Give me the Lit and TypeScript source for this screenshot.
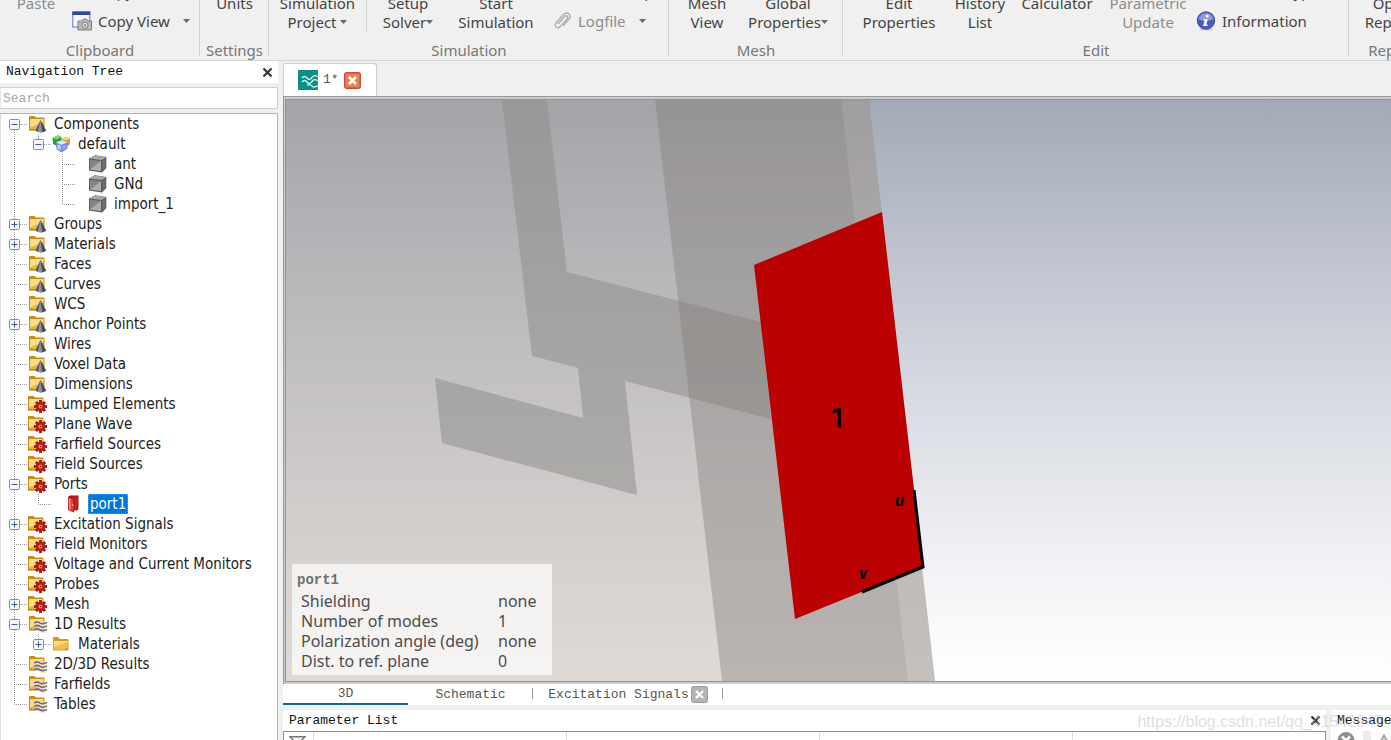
import { LitElement, html, css, svg, nothing, TemplateResult } from "lit";
import { customElement, property } from "lit/decorators.js";

type IconName = "cone" | "gear" | "wave" | "folder" | "cubes" | "solid" | "port";

interface TreeNode {
  label: string;
  icon: IconName;
  state?: "open" | "closed";
  leaf?: boolean;
  selected?: boolean;
  children?: TreeNode[];
}

const TREE: TreeNode[] = [
  {
    label: "Components", icon: "cone", state: "open", children: [
      {
        label: "default", icon: "cubes", state: "open", children: [
          { label: "ant", icon: "solid", leaf: true },
          { label: "GNd", icon: "solid", leaf: true },
          { label: "import_1", icon: "solid", leaf: true },
        ],
      },
    ],
  },
  { label: "Groups", icon: "cone", state: "closed" },
  { label: "Materials", icon: "cone", state: "closed" },
  { label: "Faces", icon: "cone" },
  { label: "Curves", icon: "cone" },
  { label: "WCS", icon: "cone" },
  { label: "Anchor Points", icon: "cone", state: "closed" },
  { label: "Wires", icon: "cone" },
  { label: "Voxel Data", icon: "cone" },
  { label: "Dimensions", icon: "cone" },
  { label: "Lumped Elements", icon: "gear" },
  { label: "Plane Wave", icon: "gear" },
  { label: "Farfield Sources", icon: "gear" },
  { label: "Field Sources", icon: "gear" },
  {
    label: "Ports", icon: "gear", state: "open", children: [
      { label: "port1", icon: "port", leaf: true, selected: true },
    ],
  },
  { label: "Excitation Signals", icon: "gear", state: "closed" },
  { label: "Field Monitors", icon: "gear" },
  { label: "Voltage and Current Monitors", icon: "gear" },
  { label: "Probes", icon: "gear" },
  { label: "Mesh", icon: "gear", state: "closed" },
  {
    label: "1D Results", icon: "wave", state: "open", children: [
      { label: "Materials", icon: "folder", state: "closed" },
    ],
  },
  { label: "2D/3D Results", icon: "wave" },
  { label: "Farfields", icon: "wave" },
  { label: "Tables", icon: "wave" },
];

const folderShape = svg`
  <path d="M1 2 Q1 1 2 1 H6.5 L8 2.5 H15.5 Q16.5 2.5 16.5 3.5 V15 H1 Z" fill="#c98d0c"/>
  <path d="M2 4 H15.5 V14 H2 Z" fill="#eab43a"/>
  <path d="M2 4 H15.5 V7 L2 12.5 Z" fill="#f8dc8c"/>
  <path d="M1 15 H16.5" stroke="#b57b06" stroke-width="1"/>`;

const gearTeeth = [0, 45, 90, 135].map(
  (a) => svg`<path d="M12.5 5 V18" transform="rotate(${a} 12.5 11.5)" stroke="#a51414" stroke-width="2.8"/>`,
);

const ICONS: Record<IconName, TemplateResult> = {
  cone: svg`${folderShape}
    <path d="M12.5 5 L18.3 15.8 Q13 19.2 7.5 15.8 Z" fill="#4c4d56"/>
    <path d="M12.5 5 L14 17.3 Q11.5 17.4 9.8 16.6 Z" fill="#9193a4"/>`,
  gear: svg`<g transform="translate(-1 0)">${folderShape}</g>
    ${gearTeeth}<circle cx="12.5" cy="11.5" r="4.6" fill="#b51a1a"/>
    <circle cx="12.5" cy="11.5" r="1.9" fill="#e0a22c"/><circle cx="12.5" cy="11.5" r=".8" fill="#7a1010"/>`,
  wave: svg`${folderShape}
    <g fill="none" stroke="#f3e3b8" stroke-width="2.6"><path d="M6 8.5 q3 -2.5 6 0 t7 -.8 M6 12 q3 -2.5 6 0 t7 -.8 M6 15.5 q3 -2.5 6 0 t7 -.8"/></g>
    <g fill="none" stroke="#5a58a8" stroke-width="1.3"><path d="M6 8 q3 -2 6 0 t7 -.8 M6 11.5 q3 -2 6 0 t7 -.8 M6 15 q3 -2 6 0 t7 -.8"/></g>`,
  folder: svg`
    <path d="M1 4 V3 Q1 2 2 2 H6 L8 4 H15.5 Q16.5 4 16.5 5 V14.5 Q16.5 15.5 15.5 15.5 H2 Q1 15.5 1 14.5 Z" fill="#d39a1c"/>
    <path d="M1.8 6 H15.8 V12 L12 14.8 H1.8 Z" fill="#efc04c"/><path d="M1.8 6 H15.8 V7 L1.8 11.5 Z" fill="#f8db88"/>`,
  cubes: svg`
    <path d="M.5 3 L6 .3 L9.5 2 V8 L5 11 L1 9 Z" fill="#2fa02f"/><path d="M.5 3 L6 .3 L9.5 2 L5 4.5 Z" fill="#7ed47a"/>
    <path d="M9.5 3.5 L14 2 L18 3.5 V9.5 L13.5 12 L9.5 9.5 Z" fill="#e39a22"/><path d="M9.5 3.5 L14 2 L18 3.5 L13.5 5.5 Z" fill="#f8cd76"/>
    <path d="M4 7.5 L10 5 L15.5 7.5 V13.5 L9.5 17.5 L4.5 14 Z" fill="#5d7fe0"/><path d="M4 7.5 L10 5 L15.5 7.5 L9.5 10 Z" fill="#dbe4fd"/>
    <path d="M5.2 9 L9.2 10.8 V15.6 L5.4 13.4 Z" fill="#b9cafa"/><path d="M10.4 10.8 L14.4 8.9 V13 L10.4 15.6 Z" fill="#8fa9f2"/>`,
  solid: svg`
    <path d="M1 3.5 L7 .2 L18.3 2 V13 L14 17.5 L1 15.5 Z" fill="#5a5a5a"/>
    <path d="M1.4 3.4 L7 .6 L17.8 2.2 L13.8 5 Z" fill="#a9a9a9"/>
    <path d="M2 4.8 L13 6 V16 L2 14.4 Z" fill="#858585"/><path d="M2 14.4 L13 6 V16 Z" fill="#adadad"/>
    <path d="M14.4 6 L17.4 3.6 V12.6 L14.4 15.8 Z" fill="#6e6e6e"/>`,
  port: svg`
    <path d="M4 2 L6 .5 H14.5 V14 L13 15.5 H10 V17.5 L4 15 Z" fill="#a31313"/>
    <path d="M4.8 3 L9.6 4.2 V16.4 L4.8 14.4 Z" fill="#e03a3a"/><path d="M10.6 3.8 L6.5 1.5 H13.6 V14.5 H10.6 Z" fill="#c62323"/>
    <path d="M4.8 3 L6.6 3.5 V15 L4.8 14.4 Z" fill="#f08484"/><circle cx="8.6" cy="10" r=".9" fill="#f5c93c"/>`,
};

const caret = html`<svg class="caret" viewBox="0 0 7 4" aria-hidden="true"><path d="M0 0H7L3.5 4Z" fill="#6a6a6a"/></svg>`;

@customElement("ribbon-bar")
export class RibbonBar extends LitElement {
  static styles = css`
    :host {
      display: flex;
      height: 60px;
      flex: none;
      overflow: hidden;
      border-bottom: 1px solid #d2d2d2;
      background: #f0f0f0;
      color: #444;
      font: 15px/19px "Noto Sans", sans-serif;
    }
    .group {
      display: flex;
      flex: none;
      flex-direction: column;
      justify-content: flex-end;
      position: relative;
    }
    .group::after {
      content: "";
      position: absolute;
      right: 0;
      bottom: 4px;
      height: 60px;
      border-right: 1px solid #d2d2d2;
    }
    .items { display: grid; align-items: end; justify-items: center; }
    .caption { margin-top: 5px; line-height: 20px; text-align: center; color: #777; }
    .clipboard { width: 200px; }
    .clipboard .items { grid-template-columns: 72px 1fr; }
    .settings { width: 69px; }
    .simulation { width: 400px; }
    .simulation .items { grid-template-columns: 98px 82px 94px 1fr; }
    .mesh { width: 174px; }
    .mesh .items { grid-template-columns: 76px 86px; }
    .edit { width: 506px; }
    .edit .items { grid-template-columns: 112px 50px 104px 78px 1fr; }
    .report { width: 86px; }
    button {
      border: 0;
      padding: 0;
      background: none;
      color: inherit;
      font: inherit;
      white-space: nowrap;
    }
    button:disabled { color: #8c8c8c; }
    .big { padding-bottom: 3px; }
    .split { display: flex; justify-content: center; width: 100%; box-sizing: border-box; border-right: 1px solid #d2d2d2; }
    .split-cell { width: 100%; padding-bottom: 3px; }
    .split-cell .big { padding: 0; }
    .stack { justify-self: start; display: grid; row-gap: 2px; }
    .small { display: flex; align-items: center; height: 28px; gap: 6px; text-align: left; }
    .small .caret { margin-left: 7px; }
    .caret { width: 7px; height: 4px; vertical-align: 4px; }
    .ico { width: 20px; height: 20px; }
    .inset { padding-left: 9px; }
  `;

  render() {
    return html`
      <div class="group clipboard">
        <div class="items">
          <button class="big" disabled>Paste<br />&nbsp;</button>
          <div class="stack">
            <button class="small"><svg class="ico"></svg>Copy</button>
            <button class="small">
              <svg class="ico" viewBox="0 0 20 20" aria-hidden="true">
                <rect x=".8" y="1" width="17" height="15" fill="#f3f6fc" stroke="#5e7ab8" stroke-width="1"/>
                <rect x=".3" y=".5" width="18" height="3.5" fill="#2f4c93"/>
                <path d="M6 10h4l1.5-2h3l1.5 2h3.5v9H6Z" fill="#b9b9b9" stroke="#7d7d7d"/>
                <circle cx="13" cy="14.3" r="3" fill="#eee" stroke="#777"/><circle cx="13" cy="14.3" r="1.2" fill="#888"/>
              </svg>Copy View ${caret}
            </button>
          </div>
        </div>
        <div class="caption">Clipboard</div>
      </div>
      <div class="group settings">
        <div class="items"><button class="big">Units<br />&nbsp;</button></div>
        <div class="caption">Settings</div>
      </div>
      <div class="group simulation">
        <div class="items">
          <div class="split-cell"><div class="split"><button class="big">Simulation<br />Project ${caret}</button></div></div>
          <button class="big">Setup<br />Solver${caret}</button>
          <button class="big">Start<br />Simulation</button>
          <div class="stack inset">
            <button class="small"><svg class="ico"></svg>Par. Sweep</button>
            <button class="small" disabled>
              <svg class="ico" viewBox="0 0 20 20" aria-hidden="true">
                <path d="M6 13 L12.5 5.5 Q14 4 15.2 5.2 Q16.2 6.4 15 7.8 L8 15.8 Q6 17.8 4 16 Q2.2 14.2 4 12 L11.5 3.5 Q14.5 .8 17 3 Q19.2 5.4 17 8 L11 15" fill="none" stroke="#a9a9a9" stroke-width="1.3"/>
              </svg>Logfile ${caret}
            </button>
          </div>
        </div>
        <div class="caption">Simulation</div>
      </div>
      <div class="group mesh">
        <div class="items">
          <button class="big">Mesh<br />View</button>
          <button class="big">Global<br />Properties${caret}</button>
        </div>
        <div class="caption">Mesh</div>
      </div>
      <div class="group edit">
        <div class="items">
          <button class="big">Edit<br />Properties</button>
          <button class="big">History<br />List</button>
          <button class="big">Calculator<br />&nbsp;</button>
          <button class="big" disabled>Parametric<br />Update</button>
          <div class="stack inset">
            <button class="small"><svg class="ico"></svg>Problem Type</button>
            <button class="small">
              <svg class="ico" viewBox="0 0 20 20" aria-hidden="true">
                <ellipse cx="10" cy="18.3" rx="7" ry="1.2" fill="#c8c8c8"/>
                <circle cx="10" cy="9.5" r="8.7" fill="#4a60b8" stroke="#3b4ea0"/>
                <path d="M2.5 8 A7.8 7.8 0 0 1 17.5 8 Q10 12 2.5 8Z" fill="#8d9ad6"/>
                <circle cx="11.2" cy="5" r="1.6" fill="#fff"/><path d="M7.5 8.3H11.8L10.3 13.6H11.8L11.3 15H7L8.7 9.6H7.2Z" fill="#fff"/>
              </svg>Information
            </button>
          </div>
        </div>
        <div class="caption">Edit</div>
      </div>
      <div class="group report">
        <div class="items"><button class="big">Open<br />Report${caret}</button></div>
        <div class="caption">Report</div>
      </div>
    `;
  }
}

@customElement("nav-tree")
export class NavTree extends LitElement {
  @property({ attribute: false }) nodes: TreeNode[] = [];

  static styles = css`
    :host {
      display: block;
      overflow: hidden;
      border: 1px solid #b4b4b4;
      border-left-color: #dcdcdc;
      border-bottom: 0;
      background: #fff;
      color: #222;
      font: 15px/20px "DejaVu Sans Condensed", "Noto Sans", sans-serif;
    }
    ul { list-style: none; margin: 0; padding: 0; }
    .nested { margin-left: 24px; }
    li {
      background: repeating-linear-gradient(#9a9a9a 0 1px, transparent 1px 2px) 13px 0 / 1px 100% no-repeat;
    }
    li:last-child { background-size: 1px 10px; }
    .root > li:first-child { background-position-y: 10px; }
    .row { display: flex; align-items: center; height: 20px; }
    .joint {
      display: flex;
      flex: none;
      align-items: center;
      width: 27px;
      height: 20px;
      padding-left: 8px;
      box-sizing: border-box;
      background: repeating-linear-gradient(90deg, #9a9a9a 0 1px, transparent 1px 2px) 13px 10px / 14px 1px no-repeat;
    }
    .toggle { display: flex; border: 0; padding: 0; background: none; }
    .toggle svg { width: 11px; height: 11px; }
    .icon { flex: none; width: 20px; height: 18px; }
    .leaf .icon { margin-left: 12px; }
    .label { margin-left: 4px; padding: 0 2px; white-space: nowrap; }
    .selected { background: #0078d7; color: #fff; outline: 1px dotted #d68a28; outline-offset: -1px; }
  `;

  private row(n: TreeNode): TemplateResult {
    return html`
      <li role="treeitem">
        <div class="row ${n.leaf ? "leaf" : ""}">
          <span class="joint">
            ${n.state
              ? html`<button class="toggle" aria-label=${n.state === "open" ? "Collapse" : "Expand"}>
                  <svg viewBox="0 0 11 11">
                    <rect x=".5" y=".5" width="10" height="10" rx="1" fill="#f8f8f8" stroke="#8c8c8c" />
                    <path d=${n.state === "open" ? "M2.5 5.5H8.5" : "M2.5 5.5H8.5M5.5 2.5V8.5"} stroke="#3c58a6" />
                  </svg>
                </button>`
              : nothing}
          </span>
          <svg class="icon" viewBox="0 0 20 18" aria-hidden="true">${ICONS[n.icon]}</svg>
          <span class="label ${n.selected ? "selected" : ""}">${n.label}</span>
        </div>
        ${n.children ? html`<ul class="nested" role="group">${n.children.map((c) => this.row(c))}</ul>` : nothing}
      </li>
    `;
  }

  render() {
    return html`<ul class="root" role="tree">${this.nodes.map((n) => this.row(n))}</ul>`;
  }
}

const MODEL_INFO: [string, string][] = [
  ["Shielding", "none"],
  ["Number of modes", "1"],
  ["Polarization angle (deg)", "none"],
  ["Dist. to ref. plane", "0"],
];

@customElement("model-view")
export class ModelView extends LitElement {
  static styles = css`
    :host {
      display: flex;
      flex: 1;
      min-height: 0;
      position: relative;
      border: solid #999;
      border-width: 1px 0 0 1px;
      padding: 2px 0 2px 1px;
      background: #cbcbcb;
    }
    .canvas {
      flex: 1;
      min-width: 0;
      border: solid #939393;
      border-width: 1px 0 1px 1px;
      background: linear-gradient(#a3a9b7, #bec3cf 26%, #d8dbe2 52%, #f1f2f5 80%, #fff);
      overflow: hidden;
    }
    .scene { display: block; width: 100%; height: 100%; }
    .tag { font-family: Roboto, "Liberation Sans", sans-serif; fill: #000; }
    .num { font-size: 26px; stroke: #000; }
    .axis { font-size: 17px; font-style: italic; font-weight: bold; }
    .info {
      position: absolute;
      left: 8px;
      bottom: 9px;
      width: 260px;
      box-sizing: border-box;
      padding: 6px 5px 4px;
      background: rgba(255, 255, 255, 0.7);
      color: #4c4c4c;
      font: 16px/20px "Noto Sans", sans-serif;
    }
    .info-title { margin: 0; font: bold 14px/20px "Liberation Mono", monospace; color: #707070; }
    table { border-collapse: collapse; margin: 1px 0 0 4px; }
    th, td { padding: 0; font-weight: normal; text-align: left; white-space: nowrap; }
    th { width: 197px; }
  `;

  render() {
    return html`
      <div class="canvas">
        <svg class="scene" viewBox="0 0 1106 581" preserveAspectRatio="xMinYMin slice" role="img" aria-label="3D model">
          <path d="M0 0H583L649 581H0Z" fill="rgb(168,155,145)" fill-opacity=".37" />
          <path d="M216 0H261L281 172L475 222L485 319L339 281L351 395L156 343L149 278L297 318L292 268L246 256Z" fill="rgb(141,141,138)" fill-opacity=".53" />
          <path d="M369 0H583L649 581H436Z" fill="rgb(153,148,144)" fill-opacity=".36" />
          <path d="M369 0H555L622 581H436Z" fill-opacity=".06" />
          <path d="M468 165L596 112L637 467L509 519Z" fill="#ba0000" />
          <path d="M628 390L637 467L576 492" fill="none" stroke="#000" stroke-width="3" />
          <text class="tag num" x="545" y="327">1</text>
          <text class="tag axis" x="609" y="406">u</text>
          <text class="tag axis" x="573" y="479">v</text>
        </svg>
      </div>
      <div class="info">
        <h3 class="info-title">port1</h3>
        <table>
          ${MODEL_INFO.map(([k, v]) => html`<tr><th scope="row">${k}</th><td>${v}</td></tr>`)}
        </table>
      </div>
    `;
  }
}

const crossIcon = html`<svg class="cross" viewBox="0 0 11 11" aria-hidden="true"><path d="M1.5 1.5L9.5 9.5M9.5 1.5L1.5 9.5" stroke="#333" stroke-width="2.2"/></svg>`;

@customElement("app-root")
export class AppRoot extends LitElement {
  static styles = css`
    :host {
      display: flex;
      flex-direction: column;
      height: 100vh;
      position: relative;
      overflow: hidden;
      background: #f0f0f0;
      color: #222;
      font: 13px/20px "Liberation Mono", monospace;
    }
    button { border: 0; padding: 0; background: none; color: inherit; font: inherit; display: flex; align-items: center; white-space: nowrap; }
    h2 { margin: 0; font: inherit; }
    .main { display: flex; flex: 1; min-height: 0; gap: 5px; }
    .sidebar { display: flex; flex: none; flex-direction: column; width: 278px; }
    .pane-head { display: flex; flex: none; align-items: center; justify-content: space-between; height: 21px; padding: 0 5px 0 6px; background: #fff; color: #111; overflow: hidden; }
    .sidebar .pane-head { height: 22px; }
    .cross { width: 11px; height: 11px; }
    .search {
      flex: none;
      height: 22px;
      margin: 4px 0;
      box-sizing: border-box;
      width: 100%;
      padding: 0 2px;
      border: 1px solid #cfcfcf;
      border-left-color: #e4e4e4;
      background: #fff;
      font: 13px/18px "Liberation Mono", monospace;
    }
    .search::placeholder { color: #a8a8a8; opacity: 1; }
    nav-tree { flex: 1; }
    .work { display: flex; flex: 1; flex-direction: column; min-width: 0; }
    .doc-tabs { display: flex; flex: none; align-items: flex-end; height: 35px; }
    .doc-tab { display: flex; align-items: center; gap: 5px; height: 33px; box-sizing: border-box; padding: 0 15px 0 14px; border: 1px solid #cfcfcf; border-bottom: 0; border-radius: 3px 3px 0 0; background: #fff; color: #555; }
    .doc-icon { width: 20px; height: 20px; }
    .badge { width: 17px; height: 17px; }
    .view-tabs { display: flex; flex: none; height: 21px; background: #fff; color: #555; }
    .view-tab { justify-content: center; width: 125px; }
    .current { box-sizing: border-box; border-bottom: 2px solid #1b648c; }
    .wide { gap: 2px; width: 190px; }
    .with-rule { position: relative; }
    .with-rule::after { content: ""; position: absolute; right: 0; top: 4px; height: 11px; border-right: 1px solid #9a9a9a; }
    .bottom { display: flex; flex: none; gap: 5px; height: 30px; margin-top: 5px; overflow: hidden; }
    .params { flex: 1; min-width: 0; }
    .messages { flex: none; width: 60px; background: #fff; overflow: hidden; }
    .message-tools { display: flex; gap: 4px; }
    .tool-cell { width: 28px; padding: 0 6px; box-sizing: border-box; }
    .tool-cell svg { display: block; width: 18px; height: 18px; }
    .tool-rest { flex: 1; padding-left: 6px; border-left: 8px solid #ececec; }
    .tool-rest svg { display: block; width: 14px; height: 16px; }
    table { width: 100%; table-layout: fixed; border-collapse: collapse; background: #fff; outline: 1px solid #8b909a; outline-offset: -1px; }
    th { height: 24px; padding: 5px 4px 0; border-left: 1px solid #dcdcdc; font-weight: normal; text-align: left; vertical-align: top; }
    .filter { width: 22px; border-left: 0; }
    .filter svg { display: block; width: 17px; height: 12px; margin-left: 2px; }
    .watermark { position: absolute; right: 8px; bottom: 8px; color: rgba(190, 190, 190, 0.5); font: 16px/20px "Liberation Sans", sans-serif; pointer-events: none; }
  `;

  render() {
    return html`
      <ribbon-bar></ribbon-bar>
      <main class="main">
        <aside class="sidebar">
          <div class="pane-head"><h2>Navigation Tree</h2><button aria-label="Close navigation tree">${crossIcon}</button></div>
          <input class="search" type="text" placeholder="Search" aria-label="Search" />
          <nav-tree .nodes=${TREE}></nav-tree>
        </aside>
        <section class="work">
          <div class="doc-tabs">
            <div class="doc-tab">
              <svg class="doc-icon" viewBox="0 0 20 20" aria-hidden="true">
                <rect width="20" height="20" fill="#0b9088" />
                <path d="M4 8q2.5-3 5 0t5-.5t6-.5M4 12q2.5-3 5 0t5-.5t6-.5M9 15.5q2.5-2 5 .5t6-.5" fill="none" stroke="#d9f4f1" stroke-width="1.3" />
              </svg>
              <span>1*</span>
              <button aria-label="Close document">
                <svg class="badge" viewBox="0 0 17 17"><rect x=".7" y=".7" width="15.6" height="15.6" rx="2" fill="#e08558" stroke="#cf4a38" stroke-width="1.4" /><path d="M5 5L12 12M12 5L5 12" stroke="#fff" stroke-width="2.6" /></svg>
              </button>
            </div>
          </div>
          <model-view></model-view>
          <div class="view-tabs">
            <button class="view-tab current">3D</button>
            <button class="view-tab with-rule">Schematic</button>
            <button class="view-tab wide with-rule">
              Excitation Signals
              <svg class="badge" viewBox="0 0 17 17" aria-hidden="true"><rect x=".5" y=".5" width="16" height="16" rx="2" fill="#b4b4b4" stroke="#9c9c9c" /><path d="M5 5L12 12M12 5L5 12" stroke="#fff" stroke-width="2.4" /></svg>
            </button>
          </div>
          <div class="bottom">
            <section class="params">
              <div class="pane-head"><h2>Parameter List</h2><button aria-label="Close parameter list">${crossIcon}</button></div>
              <table>
                <tr>
                  <th class="filter"><svg viewBox="0 0 17 12" aria-label="Filter"><path d="M1 .8H16L10 7V12H7V7Z" fill="#f2f2f2" stroke="#777" stroke-width="1.4" /></svg></th>
                  <th>Name</th><th>Expression</th><th>Value</th><th>Description</th>
                </tr>
              </table>
            </section>
            <section class="messages">
              <div class="pane-head"><h2>Messages</h2></div>
              <div class="message-tools">
                <span class="tool-cell"><svg viewBox="0 0 18 18"><circle cx="9" cy="9.5" r="8.5" fill="#8f8f8f" /><path d="M5 5.5L13 13.5M13 5.5L5 13.5" stroke="#fff" stroke-width="2.6" /></svg></span>
                <span class="tool-rest"><svg viewBox="0 0 14 16"><path d="M7 4L13 15H1Z" fill="#ccc" stroke="#999" stroke-width="1.4" /></svg></span>
              </div>
            </section>
          </div>
        </section>
      </main>
      <div class="watermark">https://blog.csdn.net/qq_41542947</div>
    `;
  }
}
